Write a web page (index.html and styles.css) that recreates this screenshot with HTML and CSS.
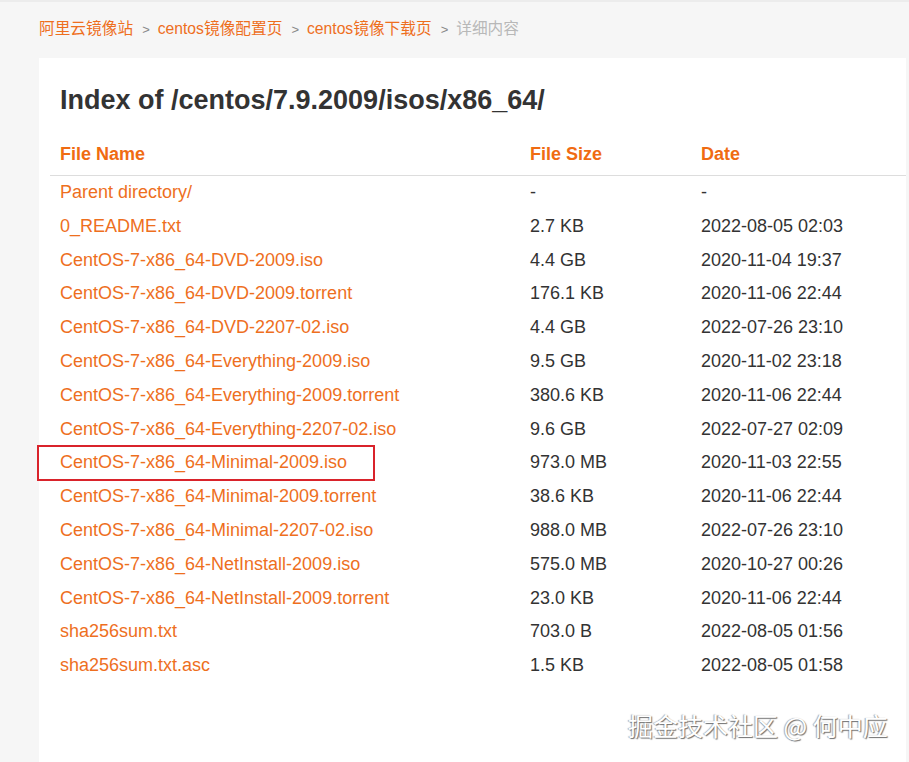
FILE: index.html
```html
<!DOCTYPE html>
<html>
<head>
  <meta charset="utf-8">
  <link rel="stylesheet" href="styles.css">
</head>
<body>
  <div class="breadcrumb">
    <a href="#">阿里云镜像站</a><span class="sep">&gt;</span><a href="#">centos镜像配置页</a><span class="sep">&gt;</span><a href="#">centos镜像下载页</a><span class="sep">&gt;</span><span class="current">详细内容</span>
  </div>

  <div class="card">
    <h1>Index of /centos/7.9.2009/isos/x86_64/</h1>
    <table class="listing">
      <thead>
        <tr>
          <th class="col-name">File Name</th>
          <th class="col-size">File Size</th>
          <th>Date</th>
        </tr>
      </thead>
      <tbody>
        <tr><td><a href="#">Parent directory/</a></td><td>-</td><td>-</td></tr>
        <tr><td><a href="#">0_README.txt</a></td><td>2.7 KB</td><td>2022-08-05 02:03</td></tr>
        <tr><td><a href="#">CentOS-7-x86_64-DVD-2009.iso</a></td><td>4.4 GB</td><td>2020-11-04 19:37</td></tr>
        <tr><td><a href="#">CentOS-7-x86_64-DVD-2009.torrent</a></td><td>176.1 KB</td><td>2020-11-06 22:44</td></tr>
        <tr><td><a href="#">CentOS-7-x86_64-DVD-2207-02.iso</a></td><td>4.4 GB</td><td>2022-07-26 23:10</td></tr>
        <tr><td><a href="#">CentOS-7-x86_64-Everything-2009.iso</a></td><td>9.5 GB</td><td>2020-11-02 23:18</td></tr>
        <tr><td><a href="#">CentOS-7-x86_64-Everything-2009.torrent</a></td><td>380.6 KB</td><td>2020-11-06 22:44</td></tr>
        <tr><td><a href="#">CentOS-7-x86_64-Everything-2207-02.iso</a></td><td>9.6 GB</td><td>2022-07-27 02:09</td></tr>
        <tr><td class="marked"><a href="#">CentOS-7-x86_64-Minimal-2009.iso</a><span class="highlight"></span></td><td>973.0 MB</td><td>2020-11-03 22:55</td></tr>
        <tr><td><a href="#">CentOS-7-x86_64-Minimal-2009.torrent</a></td><td>38.6 KB</td><td>2020-11-06 22:44</td></tr>
        <tr><td><a href="#">CentOS-7-x86_64-Minimal-2207-02.iso</a></td><td>988.0 MB</td><td>2022-07-26 23:10</td></tr>
        <tr><td><a href="#">CentOS-7-x86_64-NetInstall-2009.iso</a></td><td>575.0 MB</td><td>2020-10-27 00:26</td></tr>
        <tr><td><a href="#">CentOS-7-x86_64-NetInstall-2009.torrent</a></td><td>23.0 KB</td><td>2020-11-06 22:44</td></tr>
        <tr><td><a href="#">sha256sum.txt</a></td><td>703.0 B</td><td>2022-08-05 01:56</td></tr>
        <tr><td><a href="#">sha256sum.txt.asc</a></td><td>1.5 KB</td><td>2022-08-05 01:58</td></tr>
      </tbody>
    </table>
  </div>

  <div class="watermark">掘金技术社区 @ 何中应</div>
</body>
</html>
```

FILE: styles.css
```css
html, body {
  height: 100%;
}
body {
  margin: 0;
  background: #f6f6f6;
  border-top: 2px solid #ececec;
  box-sizing: border-box;
  font-family: "Liberation Sans", Arial, "Noto Sans CJK SC", sans-serif;
  color: #333333;
  overflow: hidden;
  position: relative;
  display: flex;
  flex-direction: column;
}
a {
  color: #ee6f1e;
  text-decoration: none;
}
.breadcrumb {
  padding: 17px 0 0 39px;
  height: 39px;
  font-size: 15.7px;
  line-height: 20px;
}
.breadcrumb .sep {
  color: #888888;
  font-size: 13px;
  padding: 0 8px 0 9px;
}
.breadcrumb .current {
  color: #b8b8b8;
}
.card {
  flex: 1;
  margin: 0 3px 0 39px;
  background: white;
  padding: 27px 0 0 11px;
}
.card h1 {
  margin: 0 0 21px 10px;
  font-size: 27px;
  line-height: 30px;
  font-weight: bold;
  color: #333333;
}
.listing {
  width: 100%;
  border-collapse: collapse;
  font-size: 18px;
}
.listing th {
  text-align: left;
  color: #f06b12;
  font-weight: bold;
  padding: 1px 10px 4px;
  line-height: 34px;
  border-bottom: 1px solid #dddddd;
}
.listing .col-name {
  width: 450px;
}
.listing .col-size {
  width: 151px;
}
.listing td {
  padding: 0 10px;
  line-height: 33.8px;
  white-space: nowrap;
}
.marked {
  position: relative;
}
.highlight {
  position: absolute;
  left: -13px;
  top: -1px;
  width: 334px;
  height: 32px;
  border: 2px solid #d9232b;
}
.watermark {
  position: absolute;
  left: 628px;
  top: 707px;
  font-family: "Noto Sans CJK SC", sans-serif;
  font-size: 25px;
  line-height: 32px;
  color: #ffffff;
  text-shadow: 1px 1px 1px #6f6f6f, -1px 0 1px #a8a8a8;
}
```
